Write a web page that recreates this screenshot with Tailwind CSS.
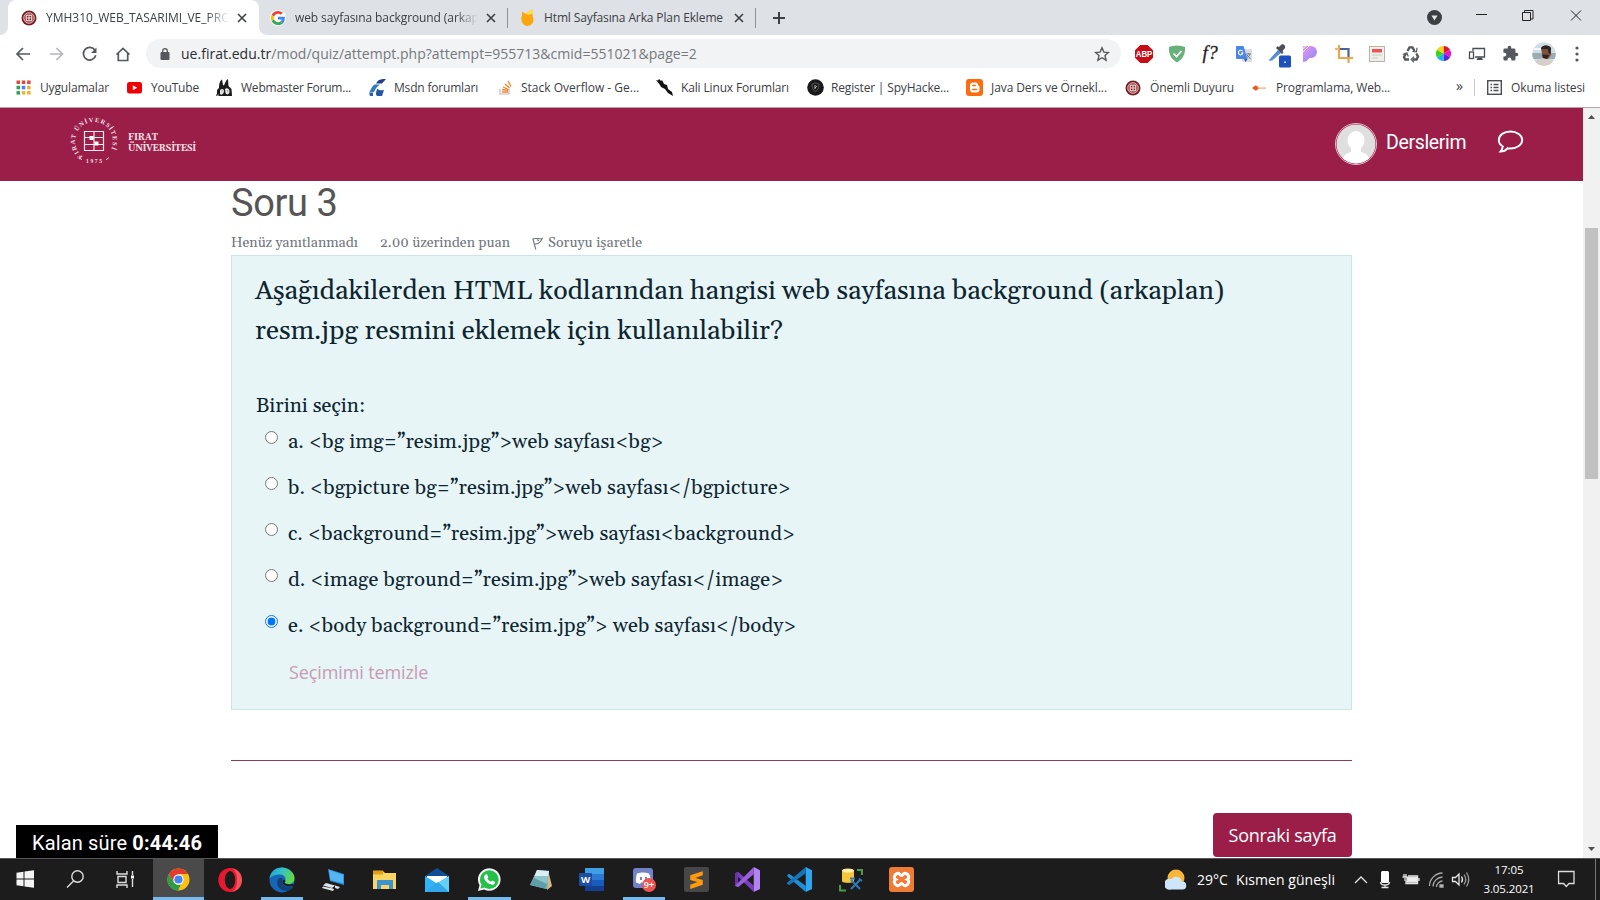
<!DOCTYPE html>
<html lang="tr">
<head>
<meta charset="utf-8">
<title>YMH310_WEB_TASARIMI_VE_PROGRAMLAMA</title>
<script src="https://cdn.jsdelivr.net/npm/@tailwindcss/browser@4"></script>
</head>
<body class="w-[1600px] h-[900px] overflow-hidden bg-white font-['Open_Sans',sans-serif] text-[#3c4043]">
<svg class="hidden">
  <symbol id="x" viewBox="0 0 10 10"><path d="M1 1l8 8M9 1L1 9" stroke="#3c4043" stroke-width="1.6" fill="none"/></symbol>
  <symbol id="firat" viewBox="0 0 16 16"><circle cx="8" cy="8" r="7.5" fill="#7b1c22"/><circle cx="8" cy="8" r="5.3" fill="#a04a4e" stroke="#f3dede" stroke-width=".8"/><path d="M5.3 5.3h5.4v5.4H5.3zM7 7h2v2H7z" fill="#7b1c22" stroke="#fff" stroke-width=".9"/></symbol>
</svg>
<div class="flex flex-col w-full h-full">

  <!-- tab strip -->
  <div class="flex h-[35px] bg-[#dee1e6] text-[12px]">
    <div class="w-2 bg-white"><div class="h-full bg-[#dee1e6] rounded-br-lg"></div></div>
    <div class="flex items-center w-[251px] h-full bg-white rounded-t-lg pl-[13px]">
      <svg class="w-4 h-4"><use href="#firat"/></svg>
      <div class="ml-[9px] w-[183px] overflow-hidden whitespace-nowrap mask-r-from-88%">YMH310_WEB_TASARIMI_VE_PRO</div>
      <svg class="ml-2 w-[10px] h-[10px]"><use href="#x"/></svg>
    </div>
    <div class="w-2 bg-white"><div class="h-full bg-[#dee1e6] rounded-bl-lg"></div></div>
    <div class="flex items-center w-[240px] pl-[3px]">
      <svg class="w-4 h-4" viewBox="-3 -3 54 54"><circle cx="24" cy="24" r="27" fill="#fff"/><path fill="#EA4335" d="M24 9.5c3.5 0 6.700 1.200 9.200 3.600l6.900-6.900C35.900 2.400 30.500 0 24 0 14.600 0 6.500 5.400 2.600 13.200l8 6.200C12.400 13.700 17.700 9.500 24 9.500z"/><path fill="#4285F4" d="M47 24.600c0-1.600-.2-3.100-.4-4.600H24v9h12.900c-.6 3-2.300 5.500-4.800 7.200l7.700 6C44.400 38 47 31.800 47 24.600z"/><path fill="#FBBC05" d="M10.500 28.600c-.5-1.500-.8-3-.8-4.600s.3-3.100.8-4.600l-8-6.200C.9 16.500 0 20.100 0 24s.9 7.500 2.600 10.800z"/><path fill="#34A853" d="M24 48c6.500 0 11.900-2.100 15.900-5.800l-7.700-6c-2.200 1.500-4.900 2.300-8.200 2.300-6.300 0-11.600-4.200-13.500-9.900l-8 6.200C6.500 42.600 14.600 48 24 48z"/></svg>
      <div class="ml-[9px] w-[183px] overflow-hidden whitespace-nowrap mask-r-from-88% tracking-[-0.1px]">web sayfasına background (arkap</div>
      <svg class="ml-2 w-[10px] h-[10px]"><use href="#x"/></svg>
    </div>
    <div class="flex items-center">
      <div class="w-px h-5 bg-[#8f9297]"></div>
      <svg class="ml-3 w-4 h-[18px]" viewBox="0 0 16 18"><path d="M2 2.500l4 2.500C7.500 3 9.500 1.500 12.500.5c-.5 3 0 5 .5 8a6 6 0 1 1-11.500 2C1 8 2.500 6 2 2.500z" fill="#fba60b"/><path d="M12.500.5C9.500 1.500 7.500 3 6 5l2.500 1 4-1.500z" fill="#ffe14a"/></svg>
      <span class="ml-[8px] w-[180px] whitespace-nowrap tracking-[-0.123px]">Html Sayfasına Arka Plan Ekleme</span>
      <svg class="ml-[10px] w-[10px] h-[10px]"><use href="#x"/></svg>
      <div class="ml-[11px] w-px h-5 bg-[#8f9297]"></div>
      <svg class="ml-[17px] w-3 h-3" viewBox="0 0 12 12"><path d="M6 0v12M0 6h12" stroke="#3c4043" stroke-width="2"/></svg>
    </div>
    <div class="flex ml-auto items-start">
      <svg class="mt-[10px] mr-[34px] w-[15px] h-[15px]" viewBox="0 0 15 15"><circle cx="7.500" cy="7.500" r="7.500" fill="#3c4043"/><path d="M4.500 5.500h6L7.500 10.500z" fill="#e4e6ea"/></svg>
      <svg class="w-[124px] h-[35px]" viewBox="1476 0 124 35" fill="none" stroke="#222" stroke-width="1"><path d="M1476 14.500h11M1522.500 12.500h8v8h-8zM1524.500 12v-1.500h8.500v8.500h-2M1571 10.500l10 10M1581 10.500l-10 10"/></svg>
    </div>
  </div>

  <!-- toolbar -->
  <div class="flex items-center h-[38px] pb-px bg-white">
    <svg class="w-[146px] h-[38px] shrink-0" viewBox="0 35 146 38" fill="none" stroke="#55585c" stroke-width="1.700">
      <path d="M30 54H17.500M23 48l-6 6 6 6"/><path d="M50 54h12.500M56.500 48l6 6-6 6" stroke="#b4b6b9"/><path d="M95 50.300a6.300 6.300 0 1 0 .8 5"/><path d="M96.500 47.500v5.500h-5.500z" fill="#55585c" stroke="none"/><path d="M116.500 54.500L123 48.500l6.500 6M118.300 53v7.500h9.400v-7.500"/>
    </svg>
    <div class="flex items-center w-[975px] h-[29px] rounded-full bg-[#f1f3f4] pl-[14px] pr-[11px]">
      <svg class="w-[10px] h-3" viewBox="0 0 10 12"><rect x=".5" y="4" width="9" height="8" rx="1" fill="#55585c"/><path d="M2.700 5V3a2.300 2.300 0 0 1 4.600 0v2" fill="none" stroke="#55585c" stroke-width="1.300"/></svg>
      <span class="ml-[11px] whitespace-nowrap text-[14px] tracking-[0.02px] text-[#75797d]"><span class="text-[#2b2e31]">ue.firat.edu.tr</span>/mod/quiz/attempt.php?attempt=955713&amp;cmid=551021&amp;page=2</span>
      <svg class="ml-auto w-4 h-4" viewBox="0 0 16 16"><path d="M8 1.800l1.900 4.300 4.600.4-3.500 3.100 1.100 4.600L8 11.700l-4.100 2.500L5 9.600 1.500 6.500l4.600-.4z" fill="none" stroke="#55585c" stroke-width="1.400"/></svg>
    </div>
    <div class="grid grid-cols-14 items-center justify-items-center w-[467px] ml-[6px]">
      <svg class="w-[18px] h-[18px]" viewBox="0 0 18 18"><path d="M5.300 0h7.400L18 5.300v7.400L12.700 18H5.300L0 12.700V5.300z" fill="#c70d17"/><text x="9" y="12" font-family="Liberation Sans" font-weight="bold" font-size="8.200" fill="#fff" text-anchor="middle" textLength="16.500" lengthAdjust="spacingAndGlyphs">ABP</text></svg>
      <svg class="w-[18px] h-[18px]" viewBox="0 0 18 18"><path d="M9 .5C12 .5 15 1.500 17 2c.5 7-2 12-8 15.500C3 14 .5 9 1 2 3 1.500 6 .5 9 .5z" fill="#67b279"/><path d="M5.500 8.500l3 3 5-5.500" fill="none" stroke="#fff" stroke-width="1.700"/></svg>
      <span class="h-[22px] leading-[20px] font-['Liberation_Serif',serif] italic font-medium text-[19px] text-[#222] whitespace-nowrap [-webkit-text-stroke:0.3px_#222] tracking-[0.5px]">f?</span>
      <svg class="w-[18px] h-[18px]" viewBox="0 0 18 18"><rect x="7" y="4" width="10" height="13" rx="1" fill="#dcdcdc"/><path d="M11 9h5M13.500 8v1M15 9c-.5 2-2 3-3.500 4M12 10l3.500 4" stroke="#6f7b86" fill="none"/><path d="M1.500 1h7l4 13H2a1 1 0 0 1-1-1V2z" fill="#4a86e8"/><path d="M9 14l1.500 3 2-3z" fill="#2a56b8"/><path d="M7.700 6.300A2.300 2.300 0 1 0 8 8H6" stroke="#fff" fill="none" stroke-width="1.100"/></svg>
      <svg class="w-[24px] h-[26px] mt-[3px] ml-[3px]" viewBox="0 0 24 26"><path d="M2.500 17.500L11 8l3 3-9 7.500z" fill="#4e86d8"/><path d="M2 17l1 2 3-1.500 6-6" stroke="#8ba8d0" fill="none"/><path d="M9 6l6 6 1.500-1.500-1-1.500L18 6c1-2-1.500-4.500-3.500-3.500L12 5l-1.500-.8z" fill="#4b4f57"/><rect x="12" y="13.500" width="12" height="12" rx="1.500" fill="#1d51bb"/><rect x="17.300" y="19.500" width="1.500" height="1.500" fill="#fff"/></svg>
      <svg class="w-[18px] h-[18px]" viewBox="0 0 18 18"><defs><linearGradient id="pk" x1="0" y1="0" x2="1" y2="1"><stop offset="0" stop-color="#e79af0"/><stop offset="1" stop-color="#8a83f5"/></linearGradient></defs><path d="M2 1h8a5.800 5.800 0 0 1 0 12H9C7 13 7 17 2 17z" fill="url(#pk)"/><path d="M1.500 4L5 .5M1.500 7.500L8.500 .5" stroke="#fff" stroke-width=".8"/></svg>
      <svg class="w-[18px] h-[18px]" viewBox="0 0 18 18" fill="none" stroke-width="2.200"><path d="M4 0v13h9.500M13.500 12.500v5.500" stroke="#eba54a"/><path d="M0 4h4" stroke="#f0b766"/><path d="M5 4h8.500v8" stroke="#47679c"/><path d="M13 13h5" stroke="#eba54a"/></svg>
      <svg class="w-4 h-4" viewBox="0 0 16 16"><rect x=".5" y=".5" width="15" height="15" fill="#f2efea" stroke="#b8b3ac"/><rect x="3" y="3" width="10" height="3.500" fill="#e95454"/><path d="M3 9h10M3 12h6" stroke="#b6d3c8"/></svg>
      <svg class="w-[18px] h-[18px]" viewBox="0 0 18 18" fill="none" stroke="#55585c" stroke-width="2.400"><path d="M5.500 6l2-3.600h3L12.500 6M14.300 8.500l1.700 3-1.500 3H10.500M7 14.500H3.200L2 12l2-3.500"/><path d="M10.500 6.500l4 .3.500-4M12 11.700l-2.800 2.800 2.800 2.800M.800 9.500l4-1.800 1.500 3.800" stroke-width="1.200"/></svg>
      <svg class="w-[17px] h-[17px]" viewBox="-9 -9 18 18"><path d="M0 0V-8A8 8 0 0 1 6.900-4z" fill="#e0152a"/><path d="M0 0L6.900-4A8 8 0 0 1 6.900 4z" fill="#e815c8"/><path d="M0 0L6.900 4A8 8 0 0 1 0 8z" fill="#5b20e0"/><path d="M0 0V8A8 8 0 0 1-6.900 4z" fill="#18b9e8"/><path d="M0 0L-6.900 4A8 8 0 0 1-6.900-4z" fill="#37d414"/><path d="M0 0L-6.900-4A8 8 0 0 1 0-8z" fill="#f5d511"/></svg>
      <svg class="w-[18px] h-[16px]" viewBox="0 0 18 16" fill="none" stroke="#4a4d51" stroke-width="1.300"><path d="M5 5V2.500h11.500V11H7"/><rect x="1.500" y="6" width="4" height="6.500"/><path d="M8.500 14h6.500l-1.200-2.500h-4z" fill="#4a4d51" stroke="none"/></svg>
      <svg class="w-[17px] h-[17px]" viewBox="0 0 24 24"><path fill="#55585c" d="M20.500 11H19V7a2 2 0 0 0-2-2h-4V3.500a2.500 2.500 0 0 0-5 0V5H4a2 2 0 0 0-2 2v3.800h1.500a2.700 2.700 0 0 1 0 5.400H2V20a2 2 0 0 0 2 2h3.800v-1.500a2.700 2.700 0 0 1 5.400 0V22H17a2 2 0 0 0 2-2v-4h1.500a2.500 2.500 0 0 0 0-5z"/></svg>
      <svg class="w-6 h-6" viewBox="0 0 24 24"><defs><clipPath id="av"><circle cx="12" cy="12" r="11.700"/></clipPath></defs><g clip-path="url(#av)"><path fill="#cfdde4" d="M0 0h24v24H0z"/><path d="M0 11h24v6H0z" fill="#9badb2"/><path d="M2 6h9v2H2z" fill="#f5f8fa"/><path d="M2 24c1-5 5-8 10-8 6 0 9 4 10 8z" fill="#d8cdc7"/><path d="M9 7c0-4 9-5 10 0v6l-3 4-5-1z" fill="#7b5240"/><path d="M9 7c0-4 8-5 10-1l-.5 6-2-1-.5-4z" fill="#2b2423"/><path d="M10 12.500l7 .5-2 4-4-1z" fill="#33211d"/></g></svg>
      <svg class="w-1 h-4" viewBox="0 0 4 16" fill="#55585c"><circle cx="2" cy="2" r="1.600"/><circle cx="2" cy="8" r="1.600"/><circle cx="2" cy="14" r="1.600"/></svg>
    </div>
  </div>

  <!-- bookmarks bar -->
  <div class="flex items-center h-[35px] pb-[5px] pl-4 bg-white text-[12px] whitespace-nowrap border-b border-[#b9a0aa]">
    <div class="flex items-center w-[111px] gap-[9px]">
      <svg class="w-[15px] h-[15px]" viewBox="0 0 15 15"><path d="M.5.500h3.500v3.500H.5zM5.800.500h3.500v3.500H5.800zM11.100.500h3.500v3.500h-3.500z" fill="#e0493c"/><path d="M.5 5.800h3.500v3.500H.5z" fill="#2fa05a"/><path d="M5.800 5.800h3.500v3.500H5.800z" fill="#4285f4"/><path d="M11.100 5.800h3.500v3.500h-3.500zM11.100 11.100h3.500v3.500h-3.500z" fill="#f2b02c"/><path d="M.5 11.100h3.500v3.500H.5z" fill="#2fa05a"/><path d="M5.800 11.100h3.500v3.500H5.800z" fill="#f2b02c"/></svg>
      <span class="tracking-[-0.156px]">Uygulamalar</span></div>
    <div class="flex items-center w-[89px] gap-[9px]">
      <svg class="w-[15px] h-3" viewBox="0 0 15 12"><rect width="15" height="11.500" rx="2.500" fill="#f00000"/><path d="M5.800 3.300l4.500 2.500-4.500 2.500z" fill="#fff"/></svg>
      <span class="tracking-[-0.2px]">YouTube</span></div>
    <div class="flex items-center w-[153px] gap-2">
      <svg class="w-[17px] h-[17px]" viewBox="0 0 17 17"><path d="M1 17v-6l2-2C3 3 5 1 6 .5L7 6l1 .5C9 4 10 1 12 0l.5 7 3 3 .5 7z" fill="#1b1b1b"/><path d="M4 11c2-2 4-1 4 1s-2 5-4 3zM9 10c2-2 5 0 4.500 3s-3 3-4 1z" fill="#e8e8e8"/><path d="M5.500 12h1M11 12h1M0 16l3-1v2H0z" stroke="#222" fill="#eee" stroke-width=".7"/></svg>
      <span class="tracking-[-0.219px]">Webmaster Forum...</span></div>
    <div class="flex items-center w-[130px] gap-2">
      <svg class="w-[17px] h-[17px]" viewBox="0 0 17 17"><path d="M8 3C10 0 13 0 17 0l-4 4.500H7z" fill="#1f3f87"/><path d="M5.500 5.500H11C8 7 6.500 10 5 13H.5C2 10 3 7 5.500 5.500z" fill="#2d7cc1"/><path d="M8.500 9.500c1 2 3 2 6.500 1.500l-2 6H8.500c-2 0-2-4 0-7.500z" fill="#2255a5"/><path d="M0 13.500h4V17H1z" fill="#2b5fae"/></svg>
      <span class="tracking-[-0.185px]">Msdn forumları</span></div>
    <div class="flex items-center w-[157px] gap-[9px]">
      <svg class="w-[13px] h-[15px]" viewBox="0 0 13 15" fill="none"><path d="M1 9v5h9V9" stroke="#bcbbbb" stroke-width="1.200"/><path d="M3 12h6M3 9.500l6 .8M4 7l5.500 2.500M6 4l4.500 4M9 1l3 5.500" stroke="#f48024" stroke-width="1.300"/></svg>
      <span>Stack Overflow - Ge...</span></div>
    <div class="flex items-center w-[151px] gap-2">
      <svg class="w-[17px] h-[17px]" viewBox="0 0 17 17"><path d="M0 1l2 .5L3 0l2 2 1-1 2 4 3 1 1 4 4 3 1 4-5-3-3-4-4-2-1-2z" fill="#111"/></svg>
      <span class="tracking-[-0.152px]">Kali Linux Forumları</span></div>
    <div class="flex items-center w-[159px] gap-[7px]">
      <svg class="w-[17px] h-[17px]" viewBox="0 0 17 17"><circle cx="8.500" cy="8.500" r="8.300" fill="#1a1a1a"/><path d="M5 5c2 0 2-1 3.500-1S10 5 12 5c0 4-1 6-3.500 7.500C6 11 5 9 5 5z" fill="none" stroke="#666" stroke-width=".8"/><path d="M8 6v4M10 7l-2 2" stroke="#bbb"/></svg>
      <span class="tracking-[-0.175px]">Register | SpyHacke...</span></div>
    <div class="flex items-center w-[159px] gap-2">
      <svg class="w-[17px] h-[17px]" viewBox="0 0 17 17"><rect width="17" height="17" rx="3" fill="#fb6b10"/><path d="M7 3.500h2.500A2.500 2.500 0 0 1 12 6c0 1 1.500.5 1.500 1.800V10.500a3 3 0 0 1-3 3H7a3 3 0 0 1-3-3v-4a3 3 0 0 1 3-3z" fill="#fff"/><path d="M6.800 6.500h2.400M6.800 10.500h3.800" stroke="#fb6b10" stroke-width="1.500" stroke-linecap="round"/></svg>
      <span class="tracking-[-0.084px]">Java Ders ve Örnekl...</span></div>
    <div class="flex items-center w-[127px] gap-[9px]">
      <svg class="w-4 h-4"><use href="#firat"/></svg>
      <span class="tracking-[-0.109px]">Önemli Duyuru</span></div>
    <div class="flex items-center gap-[10px]">
      <svg class="w-[14px] h-2" viewBox="0 0 14 8"><path d="M6 3.500h8V4.700H6z" fill="#f5a27c"/><path d="M0 4l2-1.500C3 1 5 .8 6.500 4 5 7.200 3 7 2 5.500z" fill="#f1591d"/></svg>
      <span class="tracking-[-0.15px]">Programlama, Web...</span></div>
    <div class="flex items-center ml-auto mr-[15px]">
      <span class="text-[14px] pb-1">»</span><div class="w-px h-[17px] ml-[11px] bg-[#c6c8ca]"></div>
      <svg class="w-[15px] h-[15px] ml-[12px] mr-[9px]" viewBox="0 0 15 15" fill="none" stroke="#4b4e52"><rect x=".7" y=".7" width="13.600" height="13.600" stroke-width="1.400"/><path d="M3.500 4.500h1.500M6.500 4.500h5M3.500 7.500h1.500M6.500 7.500h5M3.500 10.500h1.500M6.500 10.500h5" stroke-width="1.300"/></svg>
      <span class="w-[74px] tracking-[-0.111px]">Okuma listesi</span></div>
  </div>

  <!-- page -->
  <div class="relative flex h-[750px]">
    <div class="flex flex-col w-[1583px] h-full">
      <div class="flex items-center h-[73px] bg-[#9a1e47] text-white">
        <svg class="ml-[68px] mb-[7px] w-[52px] h-[52px]" viewBox="-26 -26 52 52"><defs><path id="ring" d="M-10.500 15.800A19 19 0 1 1 10.500 15.800"/></defs><text font-family="Liberation Serif" font-weight="bold" font-size="6.400" fill="#f6e0e8" letter-spacing="1.050"><textPath href="#ring" startOffset="1">FIRAT ÜNİVERSİTESİ</textPath></text><text x="0" y="22" font-family="Liberation Serif" font-weight="bold" font-size="5.500" fill="#f6e0e8" text-anchor="middle" textLength="16">1975</text><path d="M-15 16.500l2 1.700 1 .3M15 16.500l-2 1.700-1 .3" stroke="#f0d4de" fill="none"/><g fill="none" stroke="#f7e6ec" stroke-width="1.200"><path d="M-9.500-9.500h19v19h-19zM0-9.500V9.500M-9.500-3.500H0M0 3.500H9.500M-9.500 3.500H0M0-3.500H9.500"/></g><path d="M-4.500-5h4v4h-4zM.5 .5h4v4h-4z" fill="#fff"/></svg>
        <div class="ml-[8px] mb-[4px] flex flex-col font-['Gelasio','Liberation_Serif',serif] font-bold text-[9px] leading-[11px] text-[#f8e3ea]"><span class="tracking-[-0.1px]">FIRAT</span><span class="w-[70px] tracking-[-0.33px]">ÜNİVERSİTESİ</span></div>
        <svg class="ml-auto mb-[2px] w-[42px] h-[42px]" viewBox="0 0 42 42"><defs><clipPath id="u"><circle cx="21" cy="21" r="19.500"/></clipPath></defs><circle cx="21" cy="21" r="20.500" fill="none" stroke="#e4bccb"/><g clip-path="url(#u)"><path fill="#dfdfdf" d="M0 0h42v42H0z"/><ellipse cx="21" cy="17.500" rx="8.500" ry="9.500" fill="#fff"/><path d="M16 24h10v5c5 1 8 4 9 9v4H7v-4c1-5 4-8 9-9z" fill="#fff"/></g></svg>
        <span class="ml-[9px] w-[80px] font-[Roboto] text-[19.500px] tracking-[-0.35px] whitespace-nowrap pb-[4px]">Derslerim</span>
        <svg class="ml-[31px] mr-[59px] mb-[5px] w-[27px] h-6" viewBox="0 0 26 24"><path d="M13 1.500C6.500 1.500 1.300 5 1.300 10c0 2.700 1.500 5 4 6.500-.3 2-1 3.500-2.300 5 3 0 5.500-1.300 7-3.200 1 .2 2 .2 3 .2 6.500 0 11.700-3.800 11.700-8.500S19.500 1.500 13 1.500z" fill="none" stroke="#fff" stroke-width="1.900"/></svg>
      </div>
      <div class="flex flex-col w-[1121px] ml-[231px] font-['Gelasio','Liberation_Serif',serif]">
        <h1 class="font-[Roboto] text-[38px] leading-[44px] tracking-[-0.4px] text-[#555]">Soru 3</h1>
        <div class="flex items-center h-[30px] pt-[7px] text-[14.100px] text-[#70767c] whitespace-nowrap">
          <span class="w-[149px]">Henüz yanıtlanmadı</span>
          <span class="w-[152px]">2.00 üzerinden puan</span>
          <svg class="w-[11px] h-[13px]" viewBox="0 0 11 13" fill="none" stroke="#70767c" stroke-width="1.100"><path d="M.8 1.500l3 11M.8 2c3-1.500 6 .5 9.500-.5C9 4 6 7.500 2.500 7M5 3l2 .5"/></svg>
          <span class="ml-[5px] tracking-[0.05px]">Soruyu işaretle</span>
        </div>
        <div class="h-[455px] border border-[#cbe5e9] bg-[#e7f5f7] pl-6 text-[#0e2530]">
          <div class="pt-[15px] text-[26.800px] leading-[40px] whitespace-nowrap -ml-px"><div>Aşağıdakilerden HTML kodlarından hangisi web sayfasına background (arkaplan)</div><div>resm.jpg resmini eklemek için kullanılabilir?</div></div>
          <div class="mt-[39px] h-[32px] leading-[32px] text-[20.450px]">Birini seçin:</div>
          <div class="flex flex-col pl-[9px] text-[20.450px] leading-[46px] tracking-[0.07px] whitespace-nowrap">
            <label class="flex h-[46px] -mt-[3px]"><input type="radio" name="q" class="mt-[12px] mr-[10px] w-[13px] h-[13px]"><span>a. &lt;bg img=”resim.jpg”&gt;web sayfası&lt;bg&gt;</span></label>
            <label class="flex h-[46px]"><input type="radio" name="q" class="mt-[12px] mr-[10px] w-[13px] h-[13px]"><span>b. &lt;bgpicture bg=”resim.jpg”&gt;web sayfası&lt;/bgpicture&gt;</span></label>
            <label class="flex h-[46px]"><input type="radio" name="q" class="mt-[12px] mr-[10px] w-[13px] h-[13px]"><span>c. &lt;background=”resim.jpg”&gt;web sayfası&lt;background&gt;</span></label>
            <label class="flex h-[46px]"><input type="radio" name="q" class="mt-[12px] mr-[10px] w-[13px] h-[13px]"><span>d. &lt;image bground=”resim.jpg”&gt;web sayfası&lt;/image&gt;</span></label>
            <label class="flex h-[46px]"><input type="radio" name="q" checked class="mt-[12px] mr-[10px] w-[13px] h-[13px]"><span>e. &lt;body background=”resim.jpg”&gt; web sayfası&lt;/body&gt;</span></label>
          </div>
          <div class="pl-[33px] mt-px leading-[44px] font-['Open_Sans',sans-serif] text-[18px] tracking-[-0.12px] text-[#c99bb2]">Seçimimi temizle</div>
        </div>
        <div class="mt-[50px] h-px bg-[#8b3c58]"></div>
        <button class="self-end mt-[52px] w-[139px] h-[44px] rounded-[4px] bg-[#9a1e47] text-white font-['Open_Sans',sans-serif] text-[18px] tracking-[-0.27px] whitespace-nowrap">Sonraki sayfa</button>
      </div>
    </div>
    <div class="flex flex-col items-center justify-between w-[17px] h-full bg-[#f1f1f1] py-[7px]">
      <svg class="w-[7px] h-1" viewBox="0 0 7 4"><path d="M0 4L3.500 0 7 4z" fill="#505050"/></svg>
      <div class="w-[13px] h-[251px] mb-[259px] bg-[#c1c1c1]"></div>
      <svg class="w-[7px] h-1" viewBox="0 0 7 4"><path d="M0 0l3.500 4L7 0z" fill="#505050"/></svg>
    </div>
    <div class="absolute left-4 bottom-0 flex items-center w-[202px] h-[33px] pt-[2px] bg-black text-white font-[Roboto] text-[20px] tracking-[0.15px] pl-4 whitespace-pre">Kalan süre <b>0:44:46</b></div>
  </div>

  <!-- taskbar -->
  <div class="flex h-[42px] bg-[#1c1c1c] border-t border-[#555] text-white">
    <svg class="w-[153px] h-[41px] shrink-0" viewBox="0 859 153 41"><path d="M16.500 872.800l7-1v6.700h-7zM24.500 871.600l9.500-1.300v8.200h-9.500zM16.500 879.500h7v6.700l-7-1zM24.500 879.500H34v8.200l-9.500-1.300z" fill="#f4f4f4"/><g fill="none" stroke="#dedede" stroke-width="1.400"><circle cx="77.500" cy="876.500" r="5.700"/><path d="M73.500 881l-6.500 6.500M117 871v3h10v-3M117 888v-3h10v3M118 876.500h8v6h-8zM132.500 871v4M132.500 879v8"/></g><path d="M131 875.500h3v3h-3z" fill="#fff"/></svg>
    <div class="flex items-center h-[41px]">
      <div class="flex items-center justify-center w-[51px] h-full bg-[#4a4a4a] border-b-3 border-[#76b9ed]"><svg class="w-[23px] h-[23px] mt-[3px]" viewBox="-12 -12 24 24"><circle r="11.500" fill="#fbc116"/><path d="M-10-5.750A11.500 11.500 0 0 1 10-5.750H0L-5.500 2z" fill="#e33b2e"/><path d="M-10-5.750L-5 3C-3 5.500 1 6 2.500 5L-.5 11.500A11.500 11.500 0 0 1-10-5.750z" fill="#2a9c4a"/><circle r="5.400" fill="#fff"/><circle r="4.300" fill="#4285f4"/></svg></div>
      <div class="flex items-center justify-center w-[52px] h-full"><svg class="w-6 h-6" viewBox="0 0 24 24"><ellipse cx="12" cy="12" rx="11.700" ry="12" fill="#e8192f"/><path d="M12 0c4 0 7 4 7 12s-3 12-7 12c7 0 12-5 12-12S19 0 12 0z" fill="#f5535c"/><ellipse cx="12" cy="12" rx="5.200" ry="9" fill="#1c1c1c"/></svg></div>
      <div class="flex items-center justify-center w-[51px] h-full relative"><svg class="w-[26px] h-[26px]" viewBox="0 0 26 26"><defs><linearGradient id="ed" x1="0" y1="0" x2="1" y2=".4"><stop offset="0" stop-color="#1b9de2"/><stop offset=".5" stop-color="#35c1c9"/><stop offset="1" stop-color="#5fd84a"/></linearGradient></defs><circle cx="13" cy="13" r="12.500" fill="#1567b6"/><path d="M.5 12C1 5 6 .5 13 .5S25.500 6 25.500 11c0 4-3 6-6 6-2.500 0-4-1-4-2 0-.7 1-1 1-3 0-2.500-2.500-4.500-6-4.500C6 7.500 1.500 9.500.5 12z" fill="url(#ed)"/><path d="M9 12c-3 6 2 12 9 12 3-.5 5-2 6.500-4.500-5 2-11 0-11.500-5 0-1 .5-2 1-2.500-1-1.500-4-1.500-5 0z" fill="#123f79"/><path d="M25.500 18.500c-5 2.500-12 .5-12-4 0-.8.500-1.500 1-2 1 0 2 1 2 2l-1 .5c0 2 4 3 8 2z" fill="#1c1c1c"/></svg><i class="absolute bottom-0 left-[5px] w-[42px] h-[3px] bg-[#76b9ed]"></i></div>
      <div class="flex items-center justify-center w-[52px] h-full"><svg class="w-6 h-[22px]" viewBox="0 0 24 22"><path d="M7 0l16 5v11L9 12z" fill="#2f94dd"/><path d="M8 1l14 5v8L9.500 11z" fill="#55b6f3"/><path d="M5 14l9 2.500-3 2.500-9-2.500zM2 17.500l10 2 1 1-1 1.500-11-3zM14 16.500l5 1.500-2 2-3-1z" fill="#dfe4e8"/></svg></div>
      <div class="flex items-center justify-center w-[51px] h-full"><svg class="w-6 h-5" viewBox="0 0 24 20"><path d="M0 1h10l2 2h11v16H0z" fill="#fcd462"/><path d="M0 .5h10v4H0z" fill="#e2a010"/><path d="M4 19v-9h16v9h-4v-4H8v4z" fill="#3b94cf"/></svg></div>
      <div class="flex items-center justify-center w-[53px] h-full"><svg class="w-[26px] h-6" viewBox="0 0 26 24"><path d="M1 8L13 0l12 8v3H1z" fill="#0f4f94"/><path d="M3 8h20v8H3z" fill="#fff"/><path d="M1 8l12 7.500L25 8v16H1z" fill="#2fb5f3"/><path d="M1 24L15 14 25 8v16z" fill="#63d0f7"/><path d="M1 24l13-10 11 10z" fill="#32a7ea"/></svg></div>
      <div class="flex items-center justify-center w-[52px] h-full relative"><svg class="w-6 h-6" viewBox="0 0 24 24"><path d="M1 23l1.500-5.800A11.300 11.300 0 1 1 7 21.500z" fill="#f5f5f5"/><circle cx="12.300" cy="11.700" r="9.400" fill="#25c04a"/><path d="M3.500 20.500l1-4 3 3z" fill="#25c04a"/><path d="M8.500 6.500l1.500-.3 1.300 3-1 1.300c1 1.700 2 2.500 3.700 3.300l1.200-1.300 2.800 1.400c0 2-1.500 2.800-3 2.800-4-.5-8-4.500-8-7.700 0-1 .7-2 1.500-2.500z" fill="#fff"/></svg><i class="absolute bottom-0 left-[5px] w-[43px] h-[3px] bg-[#76b9ed]"></i></div>
      <div class="flex items-center justify-center w-[51px] h-full"><svg class="w-6 h-6" viewBox="0 0 24 24"><path d="M19 2l4 16-5 4z" fill="#d3b988"/><path d="M8 2l12 1-2 18L1 17z" fill="#8fc2c9"/><path d="M8 2l12 1-1 5L5.500 8z" fill="#d8eef0"/><path d="M5 10l13 6-1 5L1 17z" fill="#5f9ea8"/></svg></div>
      <div class="flex items-center justify-center w-[52px] h-full"><svg class="w-[26px] h-6" viewBox="0 0 26 24"><path d="M6 0h19v6H6z" fill="#3f9fe4"/><path d="M6 6h19v6H6z" fill="#2b7bd3"/><path d="M6 12h19v6H6z" fill="#1a5cbe"/><path d="M6 18h19v5H6z" fill="#123f8f"/><rect y="5" width="13" height="13" rx="1" fill="#1b4fa3"/><text x="6.500" y="15" font-family="Open Sans" font-weight="bold" font-size="9.500" fill="#fff" text-anchor="middle">W</text></svg></div>
      <div class="flex items-center justify-center w-[52px] h-full relative"><svg class="w-6 h-6" viewBox="0 0 24 24"><rect x="1" width="20" height="20" rx="3" fill="#7382c6"/><path d="M5 5.500c4-1.500 8-1.500 12 0 1.500 3 2 6 1.700 9l-4 1.500-1-1.500H9L8 16l-4-1.500c-.3-3 0-6 1-9z" fill="#fff"/><path d="M8 9h2v3H8zM13 9h2v3h-2z" fill="#7382c6"/><circle cx="17" cy="17" r="7" fill="#ed5454"/><text x="17" y="20.200" font-family="Open Sans" font-size="9" font-weight="600" fill="#fff" text-anchor="middle">9+</text></svg><i class="absolute bottom-0 left-[5px] w-[42px] h-[3px] bg-[#76b9ed]"></i></div>
      <div class="flex items-center justify-center w-[52px] h-full"><svg class="w-[25px] h-[25px]" viewBox="0 0 24 24"><rect width="24" height="24" rx="2" fill="#474747"/><path d="M6 8l12-4v4l-7 2.500 7 2V17L6 21v-4l7-2.500-7-2z" fill="#ff9a0d"/></svg></div>
      <div class="flex items-center justify-center w-[51px] h-full"><svg class="w-[25px] h-[25px]" viewBox="0 0 24 24"><path d="M18 0l6 3v18l-6 3z" fill="#b184ef"/><path d="M18 18v6L1.500 8 0 6l3-1.500z" fill="#7a3fc0"/><path d="M0 6l3-1.500v13L0 18z" fill="#6a33ae"/><path d="M18 0v7L3 19.500 0 18l2-2z" fill="#9a5fdd"/></svg></div>
      <div class="flex items-center justify-center w-[52px] h-full"><svg class="w-[25px] h-[25px]" viewBox="0 0 24 24"><path d="M18 0l6 3v18l-6 3z" fill="#2ea6f0"/><path d="M0 8l2-1.500L18 18v6L1 9.500z" fill="#1f8fd8"/><path d="M18 0v6L2 17.500 0 16v-1z" fill="#1674b8"/></svg></div>
      <div class="flex items-center justify-center w-[51px] h-full"><svg class="w-6 h-6" viewBox="0 0 24 24"><path d="M3 2v11c0 2.500 12 2.500 12 0V2z" fill="#f3c63b"/><ellipse cx="9" cy="2.500" rx="6" ry="2" fill="#fff0a5"/><path d="M18 2h5v5M1 17v5.500h6" fill="none" stroke="#4a9a48" stroke-width="2.200"/><path d="M12 12l9 9M21 12l-9 9" stroke="#2f78b7" stroke-width="2"/><path d="M11 10.500h5M20 10.500l3 2.500" stroke="#2f78b7" stroke-width="1.800"/></svg></div>
      <div class="flex items-center justify-center w-[51px] h-full"><svg class="w-[25px] h-[25px]" viewBox="0 0 25 25"><rect width="25" height="25" rx="3" fill="#ee7b36"/><path d="M8 6.500c3-1 3 2 4.500 2s1.500-3 4.500-2 3.500 5 1.500 6c2 1 1.500 5-1.500 6s-3-2-4.500-2-1.500 3-4.500 2-3.500-5-1.500-6c-2-1-1.500-5 1.500-6z" fill="none" stroke="#fff" stroke-width="3"/></svg></div>
    </div>
    <div class="flex items-center ml-auto h-[41px]">
      <svg class="w-[22px] h-[22px]" viewBox="0 0 22 22"><circle cx="11" cy="9" r="8.500" fill="#f9b73a"/><path d="M6 20.500a5.500 5.500 0 1 1 .5-10.500 6 6 0 0 1 10.500 2.500 4 4 0 0 1 .5 8z" fill="#cfe6fa"/></svg>
      <span class="ml-[10px] w-[39px] text-[14px] whitespace-nowrap">29°C</span>
      <span class="w-[99px] text-[14px] tracking-[0.06px] whitespace-nowrap">Kısmen güneşli</span>
      <svg class="w-[137px] h-[41px]" viewBox="1335 859 137 41" fill="none" stroke="#e6e6e6" stroke-width="1.300"><path d="M1355 883l6-6 6 6"/><rect x="1381" y="871" width="8" height="12" rx="1.500" fill="#fff" stroke="none"/><path d="M1380.500 882c0 4 9 4 9 0M1385 885v2.500M1381.500 887.500h7"/><path d="M1408 876h9.500v7.500H1406v-3M1419 878v3" /><path d="M1407 877.500h9.500v4.500H1407z" fill="#eee"/><path d="M1402.500 877h5M1404 874v3M1406 874v3M1405 878v3"/><g stroke="#aaa"><path d="M1429.500 886c0-7 6-13 13-13M1433 886.500c0-5 4.500-9.500 9.500-9.500M1436.500 887c0-3 3-6 6-6"/><path d="M1440 885h3v2h-3z" fill="#eee"/></g><path d="M1452.500 877.500h3l3.500-3.500v11l-3.500-3.500h-3zM1461.500 876.500q2 3 0 6"/><path d="M1464 874.500q3.500 5 0 10M1466.500 872.500q4.500 7 0 14" stroke="#999"/></svg>
      <div class="flex flex-col items-center w-[74px] pb-px text-[11.500px] leading-[19px] tracking-[-0.1px] whitespace-nowrap"><span>17:05</span><span>3.05.2021</span></div>
      <svg class="w-[54px] h-[41px]" viewBox="1546 859 54 41" fill="none" stroke="#ddd" stroke-width="1.300"><path d="M1558.500 871.500h15.500v12h-5l-2.700 3-2.700-3h-5z"/><path d="M1595.500 859v41" stroke="#777" stroke-width="1"/></svg>
    </div>
  </div>
</div>
</body>
</html>
